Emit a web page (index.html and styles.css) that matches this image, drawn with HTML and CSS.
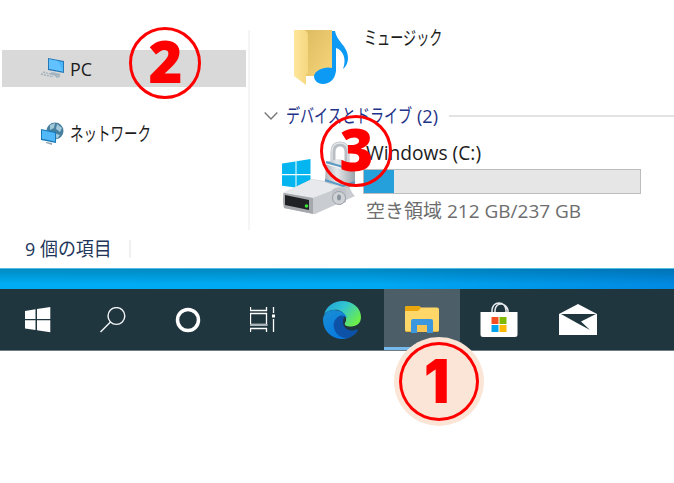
FILE: index.html
```
<!DOCTYPE html>
<html lang="ja">
<head>
<meta charset="utf-8">
<title>PC</title>
<link rel="stylesheet" href="styles.css">
</head>
<body>
<main class="screen">
  <section class="window">
    <div class="panes">
      <nav class="sidebar">
        <div class="nav-item selected">
          <svg class="nav-icon" width="26" height="26" viewBox="0 0 26 26">
            <path d="M8 2 24 5V17L8 14Z" fill="#2779b5"/><path d="M9 3.2 23 6V15.5L9 12.8Z" fill="#49b5fa"/><path d="M9 3.2 18 5 23 15.5 9 12.8Z" fill="#62c2ff"/>
            <path d="M12 16 21 18 18 20 9 18Z" fill="#a5b5c0"/><path d="M1 18 13 21M3 16 17 20" stroke="#a3b1bb" stroke-width="1.4" stroke-dasharray="2 1"/><path d="M16 21 20 20" stroke="#a6b7c2" stroke-width="2"/>
          </svg>
          <span class="label pc">PC</span>
        </div>
        <div class="nav-item">
          <svg class="nav-icon" width="26" height="26" viewBox="0 0 26 26">
            <circle cx="15" cy="10" r="8.5" fill="#477f9f"/><path d="M10 4 15 2 14 7 10 9ZM17 3 22 7 20 11 16 8ZM14 12 20 14 17 18Z" fill="#a1c9d9"/>
            <path d="M1 8 16 11V22L1 19Z" fill="#1979b8"/><path d="M2 9.3 15 12V20.5L2 17.8Z" fill="#51b8f9"/><path d="M6 21 12 22V24L6 22Z" fill="#8fa1ad"/>
          </svg>
          <span class="label network">ネットワーク</span>
        </div>
      </nav>
      <div class="content">
        <div class="music">
          <svg width="58" height="58" viewBox="0 0 58 58">
            <defs><linearGradient id="fold" x2="1"><stop stop-color="#ffe69c"/><stop offset="1" stop-color="#f5d780"/></linearGradient><linearGradient id="back" x2="1" y2="1"><stop stop-color="#dcbb61"/><stop offset="1" stop-color="#f7d67a"/></linearGradient></defs>
            <path d="M10 0H38V46H12Z" fill="url(#back)"/><path d="M0 0H10Q14 1 14 5V43L12 44V55L0 46Z" fill="url(#fold)"/>
            <path d="M38 1H41C43 12 54 16 54 28Q54 35 49 39C53 29 49 20 42 18V41C41 49 36 54 29 54 23 54 20 50 20 46 21 40 31 36 38 38Z" fill="#0c9af5"/>
          </svg>
          <span class="label music-name">ミュージック</span>
        </div>
        <div class="group">
          <svg width="14" height="10" viewBox="0 0 14 10"><path d="M.7 1.5 7 8 13.3 1.5" fill="none" stroke="#777" stroke-width="1.4"/></svg>
          <div class="group-title"><span class="label group-name">デバイスとドライブ</span><span class="label group-count">(2)</span></div>
          <i class="rule"></i>
        </div>
        <div class="drive">
          <svg class="drive-icon" width="76" height="76" viewBox="0 0 76 76">
            <defs><linearGradient id="metal" x2="1"><stop stop-color="#aeb3b9"/><stop offset=".4" stop-color="#e5e8eb"/><stop offset="1" stop-color="#9ba2aa"/></linearGradient></defs>
            <path d="M0 24.5 13.5 22.5V35H0ZM14.5 22.3 28.5 20V35H14.5ZM0 36.3H13.5V48.5L0 46.7ZM14.5 36.3H28.5V50.5L14.5 48.6Z" fill="#05b5ef"/>
            <path d="M1 54 30 40 60 45 73 57 33 75 2 69Z" fill="#c8cbcf"/><path d="M1 54 30 40 62 47 31 59Z" fill="#e8e9ec"/><path d="M31 59 66 46 72 57 31 75Z" fill="#c9ccd0"/>
            <path d="M2 54 31 59V75L2 69Q0 61 2 54Z" fill="#a5a8ac"/><path d="M3 56 27 61V71L3 66Z" fill="#202124"/><circle cx="24.5" cy="67" r="1.8" fill="#3be536"/>
            <path d="M51 26V13Q51 5 58 5T65 13V27" fill="none" stroke="#b9bec4" stroke-width="5"/><path d="M50 25V13Q50 4 58 4T66 13V25" fill="none" stroke="#e3e6e9" stroke-width="1.3"/>
            <path d="M44 23 56 20 73 25V47L61 50 43 43Z" fill="url(#metal)"/><path d="M44 23 61 28 73 25M43 41 61 47 73 43" fill="none" stroke="#5a9ac4" stroke-width="2"/><path d="M44 25 61 30 73 27" fill="none" stroke="#f4f6f8" stroke-width="1"/>
            <path d="M50 51Q55 46 64 50V63L57 66 50 61Z" fill="#c0c4ca"/><circle cx="57" cy="59" r="6.5" fill="#cfd2d6" stroke="#9aa1a9"/><ellipse cx="57" cy="58.5" rx="2" ry="3" fill="#8b949d"/>
          </svg>
          <div class="drive-info">
            <span class="label drive-name">Windows (C:)</span>
            <div class="meter"><i class="used"></i></div>
            <span class="label free">空き領域 212 GB/237 GB</span>
          </div>
        </div>
      </div>
    </div>
    <footer class="status"><span class="label count">9 個の項目</span><i class="divider"></i></footer>
  </section>
  <div class="wallpaper"></div>
  <nav class="taskbar">
    <div class="task"><svg width="26" height="26" viewBox="0 0 26 26"><path d="M0 4 10.5 2.3V12H0ZM12 2.1 25.3 0V12H12ZM0 13.2H10.5V22.9L0 21.5ZM12 13.2H25.3V25.3L12 23.2Z" fill="#fff"/></svg></div>
    <div class="task"><svg width="26" height="26" viewBox="0 0 26 26" fill="none" stroke="#f2f5f6" stroke-width="1.4"><circle cx="16.4" cy="9" r="8.4"/><path d="M10.5 15 .5 25"/></svg></div>
    <div class="task"><svg width="26" height="26" viewBox="0 0 26 26"><circle cx="13" cy="13" r="10.5" fill="none" stroke="#fff" stroke-width="3.5"/></svg></div>
    <div class="task"><svg width="26" height="26" viewBox="0 0 26 26" fill="none" stroke="#fff" stroke-width="1.3"><path d="M.5 0V3.5H16.5V0M.5 25V21.5H16.5V25M.5 6.5H16.5V17.5H.5ZM23.5 0V6M23.5 12V25"/><path d="M0 18H17.5" stroke="#aab5ba" stroke-width="2"/><path d="M22 7.5H25V10.5H22Z" fill="#fff" stroke="none"/></svg></div>
    <div class="task edge"><svg width="38" height="38" viewBox="0 0 38 38">
      <defs><linearGradient id="wave" x2="1" y2=".6"><stop stop-color="#1d9ddb"/><stop offset=".5" stop-color="#32c5d1"/><stop offset="1" stop-color="#6bed4b"/></linearGradient><linearGradient id="blue" x2=".5" y2="1"><stop stop-color="#198ed3"/><stop offset="1" stop-color="#087be0"/></linearGradient></defs>
      <path d="M1 13C4 5 11 0 19 0 30 0 38 7 38 16 38 22 34 25.500 28 25.500 23 25.500 21 24 22 22 25 18 22 11 15 9 9 8 4 10 1 13Z" fill="url(#wave)"/>
      <path d="M0 19C0 13 4 9 11 9 18 9 23 13 24 17 19 13 14 15 13 20 10 28 16 35 25 37 11 41 0 31 0 19Z" fill="url(#blue)"/>
      <path d="M22 15C15 13 9 20 11 27 13 35 20 38 26 37 30 35 34 32 35 29 34 28 33 29 30 29.500 24 30 20 26 20 21 20 18 21 16 22 15Z" fill="#0e52a8"/>
    </svg></div>
    <div class="task active"><svg width="34" height="28" viewBox="0 0 34 28"><path d="M0 2Q0 0 2 0H14L16 1.500H32Q34 1.500 34 3.500V24Q34 26 32 26H2Q0 26 0 24Z" fill="#ffd769"/><path d="M0 2Q0 0 2 0H14L16 2 13 5H0Z" fill="#e8a60c"/><path d="M1 25.500H33" stroke="#e9b33a"/><path d="M6 27V15Q6 13 8 13H26Q28 13 28 15V27H22V19H12V27Z" fill="#3b98df"/><path d="M12 19H22V26H12Z" fill="#f7c553"/></svg></div>
    <div class="task store"><svg width="38" height="36" viewBox="0 0 38 36"><path d="M12 11V8Q13 1 19 1T26 8V11M15 11V8Q16 2 21 2T28 8V11" fill="none" stroke="#e7eaec" stroke-width="1.5"/><path d="M.5 10H37.500V33Q37.500 35 35 35H3Q.5 35 .5 33Z" fill="#fff"/><path d="M11.500 15H18.500V22H11.500Z" fill="#f25022"/><path d="M19.500 15H26.500V22H19.500Z" fill="#7fba00"/><path d="M11.500 23H18.500V30H11.500Z" fill="#00a4ef"/><path d="M19.500 23H26.500V30H19.500Z" fill="#ffb900"/></svg></div>
    <div class="task mail"><svg width="38" height="32" viewBox="0 0 38 32"><path d="M0 10 19 0 38 10V31H0Z" fill="#fff"/><path d="M2 10H37L22 17.500 31 26 18 19Z" fill="#20363f"/></svg></div>
  </nav>
  <div class="badge two">2</div>
  <div class="badge three">3</div>
  <div class="badge one"><span class="numeral">1</span></div>
</main>
</body>
</html>
```
FILE: styles.css
```
* { box-sizing: border-box; }
body { margin: 0; }
.screen {
  position: relative;
  width: 674px;
  height: 483px;
  overflow: hidden;
  background: #fff;
  font-family: "Open Sans", "Noto Sans CJK JP", sans-serif;
  color: #1c1c1c;
}
svg { display: block; flex: none; }
.window { height: 268px; background: #fff; }
.panes { display: flex; height: 230px; padding-top: 30px; }
.sidebar { width: 250px; padding: 20px 0 0 2px; border-right: 2px solid #f5f5f5; }
.nav-item {
  display: flex;
  align-items: center;
  width: 244px;
  height: 37px;
  margin-bottom: 28px;
  padding-left: 38px;
  gap: 4px;
}
.selected { background: #d9d9d9; }
.label {
  display: block;
  flex: none;
  white-space: nowrap;
  line-height: 28px;
  font-size: 19px;
  transform-origin: 0 50%;
}
.pc { transform: scaleX(.94); }
.network { transform: scaleX(.71); }
.content { flex: 1; min-width: 0; }
.music { display: flex; height: 72px; padding-left: 44px; gap: 12px; }
.music-name { margin-top: -6px; transform: scaleX(.69); }
.group { display: flex; align-items: center; height: 28px; padding-left: 14px; gap: 8px; }
.group-title { display: flex; width: 155px; color: #1e3287; }
.group-name { width: 131px; transform: scaleX(.74); }
.group-count { transform: scaleX(.95); }
.rule { flex: 1; height: 2px; background: #e3e3e3; }
.drive { display: flex; padding-left: 32px; gap: 5px; }
.drive-icon { margin-top: 9px; }
.drive-info { padding-top: 9px; }
.drive-name { margin-left: 3px; font-size: 19.2px; }
.meter { width: 278px; height: 25px; margin-top: 2px; border: 1px solid #bcbcbc; background: #e6e6e6; }
.used { display: block; width: 30px; height: 23px; background: #26a0da; }
.free { margin: 3px 0 0 3px; color: #6d6d6d; }
.status { display: flex; align-items: center; height: 38px; padding-left: 25px; color: #22365a; }
.count { width: 104px; transform: scaleX(.945); }
.divider { width: 2px; height: 18px; background: #f0f0f0; }
.wallpaper {
  height: 21px;
  border-top: 1px solid #51bde0;
  background: linear-gradient(rgba(0, 60, 80, .3), transparent 75%), linear-gradient(90deg, #00adf4, #00a8f2 55%, #0089e1);
}
.taskbar { display: flex; height: 62px; background: #20363f; border-bottom: 1px solid #6e7d83; }
.task { display: flex; align-items: center; justify-content: center; width: 75px; }
.edge { width: 84px; }
.active { width: 76px; padding-top: 3px; background: #4c5f68; border-bottom: 3px solid #76b9ed; }
.store { width: 78px; }
.mail { width: 79px; }
.badge {
  position: absolute;
  display: flex;
  align-items: center;
  justify-content: center;
  width: 72px;
  height: 72px;
  padding: 0 0 4px 1px;
  border: 3px solid #f00;
  border-radius: 50%;
  color: #f00;
  font-size: 58px;
  font-weight: 800;
  line-height: 1;
}
.two { left: 129px; top: 27px; }
.three { left: 320px; top: 115px; }
.one {
  left: 399px;
  top: 342px;
  width: 80px;
  height: 79px;
  padding: 0;
  background: #fbe5d6;
  box-shadow: 0 0 0 5px #fbe5d6;
  font-family: Inter, sans-serif;
  font-size: 61px;
  font-weight: 900;
}
.numeral { margin: -1px 4px 0 0; transform: scaleX(.92); }
```
